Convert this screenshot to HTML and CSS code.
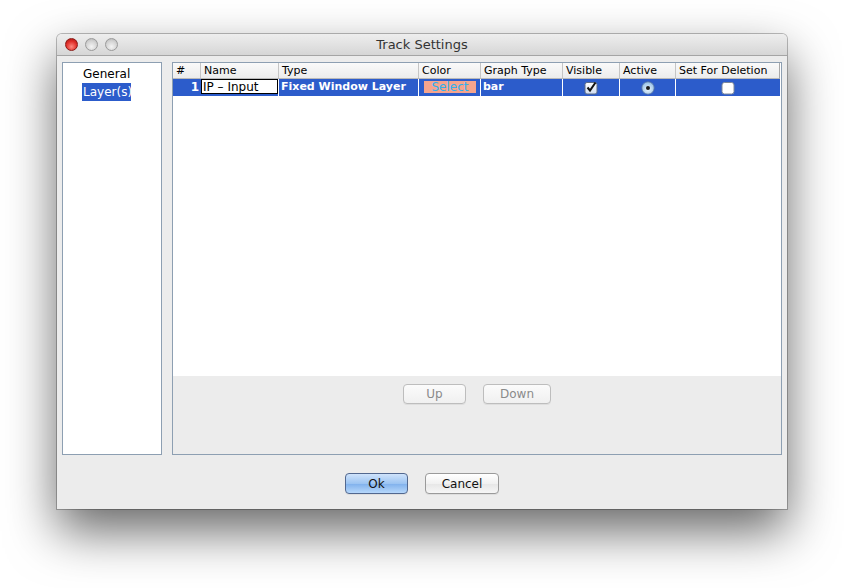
FILE: index.html
```html
<!DOCTYPE html>
<html>
<head>
<meta charset="utf-8">
<link rel="stylesheet" href="styles.css">
</head>
<body>
<div class="window">
  <div class="titlebar">
    <div class="lights">
      <span class="light red"></span>
      <span class="light gray"></span>
      <span class="light gray"></span>
    </div>
    <div class="title">Track Settings</div>
  </div>
  <div class="content">
    <div class="panels">
      <div class="sidelist">
        <div class="item">General</div>
        <div class="item selected">Layer(s)</div>
      </div>
      <div class="main">
        <div class="tablearea">
          <div class="row header">
            <div class="c c-num">#</div>
            <div class="c c-name">Name</div>
            <div class="c c-type">Type</div>
            <div class="c c-color">Color</div>
            <div class="c c-graph">Graph Type</div>
            <div class="c c-vis">Visible</div>
            <div class="c c-act">Active</div>
            <div class="c c-del">Set For Deletion</div>
          </div>
          <div class="row data">
            <div class="c c-num num">1</div>
            <div class="c c-name"><span class="editor">IP – Input</span></div>
            <div class="c c-type bold">Fixed Window Layer</div>
            <div class="c c-color"><span class="swatch">Select</span></div>
            <div class="c c-graph bold">bar</div>
            <div class="c c-vis center">
              <svg width="14" height="14" viewBox="0 0 14 14">
                <defs><linearGradient id="cb" x1="0" y1="0" x2="0" y2="1"><stop offset="0" stop-color="#ffffff"/><stop offset="1" stop-color="#cfdcef"/></linearGradient></defs>
                <rect x="1" y="1.5" width="12" height="11.5" rx="2" fill="url(#cb)" stroke="#5b6b86"/>
                <path d="M3.5 6.5 L6 9.5 L11.5 1.5" fill="none" stroke="#111" stroke-width="2"/>
              </svg>
            </div>
            <div class="c c-act center">
              <svg width="14" height="14" viewBox="0 0 14 14">
                <defs><radialGradient id="rb" cx="0.5" cy="0.6" r="0.6"><stop offset="0" stop-color="#eef6fc"/><stop offset="1" stop-color="#8fbde6"/></radialGradient></defs>
                <circle cx="7" cy="7" r="6.2" fill="url(#rb)" stroke="#56709a" stroke-width="0.8"/>
                <circle cx="7" cy="7" r="2" fill="#1a1a1a"/>
              </svg>
            </div>
            <div class="c c-del center">
              <svg width="14" height="14" viewBox="0 0 14 14">
                <rect x="1" y="1.5" width="12" height="11.5" rx="2.5" fill="#fff" stroke="#7c8798"/>
              </svg>
            </div>
          </div>
        </div>
        <div class="tools">
          <button class="btn small disabled">Up</button>
          <button class="btn small disabled">Down</button>
        </div>
      </div>
    </div>
    <div class="actions">
      <button class="btn primary">Ok</button>
      <button class="btn">Cancel</button>
    </div>
  </div>
</div>
</body>
</html>
```
FILE: styles.css
```css
html, body {
  margin: 0;
  padding: 0;
  background: #ffffff;
}
body {
  width: 844px;
  height: 588px;
  overflow: hidden;
  font-family: "DejaVu Sans", "Liberation Sans", sans-serif;
  font-size: 11px;
  color: #000;
}
.window {
  margin: 34px 0 0 57px;
  width: 730px;
  height: 475px;
  background: #ececec;
  border-radius: 5px 5px 0 0;
  box-shadow: 0 22px 50px rgba(0,0,0,0.6), 0 0 0 1px rgba(0,0,0,0.25);
  display: flex;
  flex-direction: column;
  overflow: hidden;
}
.titlebar {
  height: 22px;
  flex: 0 0 22px;
  background: linear-gradient(#eeeeee, #d6d6d6);
  border-bottom: 1px solid #a5a5a5;
  box-sizing: border-box;
  display: flex;
  align-items: center;
  position: relative;
}
.lights {
  display: flex;
  gap: 7px;
  padding-left: 8px;
}
.light {
  width: 13px;
  height: 13px;
  border-radius: 50%;
  box-sizing: border-box;
}
.light.red {
  background: radial-gradient(circle at 50% 70%, #ff8a80 0%, #e0302a 55%, #a5120f 100%);
  border: 1px solid #8b1a16;
}
.light.gray {
  background: radial-gradient(circle at 50% 70%, #f4f4f4 0%, #d2d2d2 60%, #b0b0b0 100%);
  border: 1px solid #9a9a9a;
}
.title {
  position: absolute;
  left: 0;
  right: 0;
  top: 3px;
  text-align: center;
  font-size: 13px;
  color: #333;
  pointer-events: none;
}
.content {
  flex: 1;
  display: flex;
  flex-direction: column;
  padding: 6px 5px 0 5px;
}
.panels {
  display: flex;
  gap: 10px;
  height: 393px;
}
.sidelist {
  width: 100px;
  box-sizing: border-box;
  background: #fff;
  border: 1px solid #8d9fb2;
  padding-top: 2px;
}
.sidelist .item {
  font-size: 12px;
  line-height: 18px;
  padding-left: 20px;
  width: 49px;
}
.sidelist .item.selected {
  background: #2c5ccb;
  color: #fff;
  padding-left: 1px;
  margin-left: 19px;
  width: 48px;
}
.main {
  width: 610px;
  box-sizing: border-box;
  border: 1px solid #8d9fb2;
  display: flex;
  flex-direction: column;
}
.tablearea {
  background: #fff;
  height: 313px;
  padding-right: 1px;
}
.row {
  display: flex;
}
.row.header {
  height: 16px;
  background: linear-gradient(#fafafa, #ececec);
  border-bottom: 1px solid #b9b9b9;
  width: 607px;
  border-right: 1px solid #a8a8a8;
  box-sizing: border-box;
}
.row.header .c {
  border-left: 1px solid #c5c5c5;
  line-height: 15px;
  padding-left: 3px;
}
.row.header .c-num {
  border-left: none;
}
.c {
  box-sizing: border-box;
  overflow: hidden;
  white-space: nowrap;
}
.c-num { width: 27px; }
.c-name { width: 78px; }
.c-type { width: 140px; }
.c-color { width: 62px; }
.c-graph { width: 82px; }
.c-vis { width: 57px; }
.c-act { width: 56px; }
.c-del { width: 104px; }
.row.data {
  height: 17px;
  background: #2c5ccb;
  color: #fff;
  width: 607px;
}
.row.data .c {
  border-left: 1px solid #fff;
  line-height: 16px;
  font-size: 12px;
}
.row.data .c-num {
  border-left: none;
  text-align: right;
  padding-right: 1px;
  font-weight: bold;
}
.row.data .c-name {
  border-left: none;
  padding: 0 0 1px 1px;
}
.editor {
  display: block;
  background: #fff;
  color: #000;
  border: 1px solid #000;
  height: 15px;
  line-height: 14px;
  box-sizing: border-box;
  padding-left: 1px;
  font-size: 12px;
}
.row.data .bold {
  font-weight: bold;
  font-size: 11px;
  padding-left: 2px;
}
.row.data .c-color {
  padding: 2px 4px 0 5px;
}
.swatch {
  display: block;
  background: #f6a48c;
  color: #2eb0f0;
  height: 12px;
  line-height: 12px;
  text-align: center;
  font-size: 12px;
}
.center {
  display: flex;
  align-items: center;
  justify-content: center;
}
.tools {
  flex: 1;
  display: flex;
  justify-content: center;
  gap: 17px;
  padding-top: 8px;
}
.actions {
  display: flex;
  justify-content: center;
  gap: 17px;
  padding-top: 18px;
}
.btn {
  font-family: "DejaVu Sans", "Liberation Sans", sans-serif;
  font-size: 12px;
  height: 21px;
  padding: 0;
  border: 1px solid #9a9a9a;
  border-radius: 4px;
  background: linear-gradient(#ffffff, #f1f1f1 50%, #e6e6e6 51%, #f6f6f6);
  color: #111;
  width: 74px;
  box-shadow: 0 1px 0 rgba(0,0,0,0.06);
}
.btn.primary {
  width: 63px;
  border-color: #52688f;
  background: linear-gradient(#cfe3fb, #9cc4f2 50%, #7fb0ec 51%, #b7d8fb);
}
.btn.small {
  height: 20px;
}
.btn.small:first-child { width: 63px; }
.btn.small:last-child { width: 68px; }
.btn.disabled {
  color: #8a8a8a;
  border-color: #bdbdbd;
  background: linear-gradient(#fbfbfb, #f0f0f0);
}
```
